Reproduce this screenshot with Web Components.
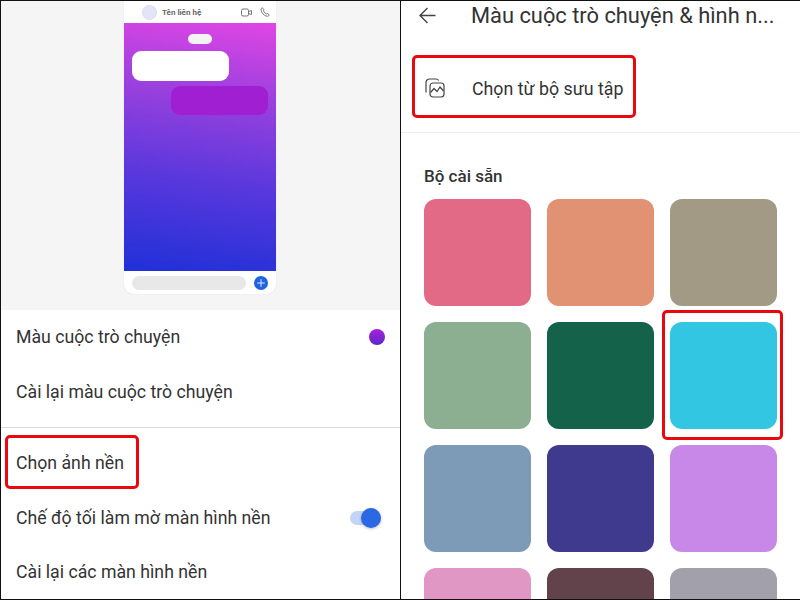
<!DOCTYPE html>
<html lang="vi">
<head>
<meta charset="utf-8">
<title>Màu cuộc trò chuyện</title>
<style>
html, body { margin: 0; height: 100%; background: #fff; }
body { font-family: Roboto, "Noto Sans", sans-serif; color: #333; overflow: hidden; }
</style>
</head>
<body>
<app-shot>
  <settings-panel slot="left">
    <chat-preview></chat-preview>
    <setting-row>Màu cuộc trò chuyện<color-dot slot="end"></color-dot></setting-row>
    <setting-row>Cài lại màu cuộc trò chuyện</setting-row>
    <hr-line></hr-line>
    <setting-row marked>Chọn ảnh nền</setting-row>
    <setting-row>Chế độ tối làm mờ màn hình nền<toggle-switch slot="end"></toggle-switch></setting-row>
    <setting-row>Cài lại các màn hình nền</setting-row>
  </settings-panel>
  <color-panel slot="right"></color-panel>
</app-shot>

<script>
class AppShot extends HTMLElement {
  constructor() {
    super();
    this.attachShadow({ mode: "open" });
    this.shadowRoot.innerHTML = `
<style>
:host { display: flex; width: 800px; height: 600px; box-sizing: border-box; border-top: 1px solid #111; border-bottom: 1px solid #111; overflow: hidden; }
.left { display: block; width: 400px; box-sizing: border-box; border-left: 1px solid #111; }
.right { display: block; width: 400px; box-sizing: border-box; border-left: 1px solid #111; }
</style>
<div class="left"><slot name="left"></slot></div>
<div class="right"><slot name="right"></slot></div>`;
  }
}

class SettingsPanel extends HTMLElement {
  constructor() {
    super();
    this.attachShadow({ mode: "open" });
    this.shadowRoot.innerHTML = `
<style>
:host { display: flex; flex-direction: column; height: 100%; }
</style>
<slot></slot>`;
  }
}

class ChatPreview extends HTMLElement {
  constructor() {
    super();
    this.attachShadow({ mode: "open" });
    this.shadowRoot.innerHTML = `
<style>
:host { display: flex; justify-content: center; flex: 0 0 auto; height: 309px; background: #f5f5f5; }
.phone { display: flex; flex-direction: column; width: 152px; height: 293px; margin-right: 1px; background: #fff; border-radius: 0 0 9px 9px; box-shadow: 0 0 1px #ccc; overflow: hidden; }
.head { display: flex; align-items: center; height: 22px; flex: none; padding: 0 6px 0 18px; gap: 5px; }
.avatar { width: 15px; height: 15px; border-radius: 50%; background: #e3e4f8; border: 1px solid #dcdcf0; box-sizing: border-box; }
.name { flex: 1; font: 700 8px Roboto, sans-serif; color: #666; white-space: nowrap; }
.head svg { display: block; }
.wall { flex: 1; display: flex; flex-direction: column; background: linear-gradient(188deg, #e046e4 0%, #9a40de 30%, #5a38dc 62%, #2030d8 100%); padding: 11px 8px 0; }
.date { align-self: center; width: 24px; height: 10px; border-radius: 5px; background: #f3f3f3; }
.in { width: 97px; height: 30px; margin-top: 7px; border-radius: 9px; background: #fff; }
.out { align-self: flex-end; width: 97px; height: 29px; margin-top: 5px; border-radius: 9px; background: #a01fd2; }
.foot { display: flex; align-items: center; height: 23px; flex: none; padding: 0 8px; gap: 8px; }
.field { flex: 1; height: 14px; border-radius: 7px; background: #e8e8e8; }
.send { display: block; }
</style>
<div class="phone">
  <div class="head">
    <span class="avatar"></span>
    <span class="name">Tên liên hệ</span>
    <svg width="11" height="9" viewBox="0 0 11 9" fill="none" stroke="#666" stroke-width="0.9"><rect x="0.5" y="1" width="7" height="7" rx="1.5"/><path d="M7.5 3.5 10.5 2.5v4l-3-1"/></svg>
    <svg width="10" height="10" viewBox="0 0 10 10" fill="none" stroke="#666" stroke-width="0.9" style="margin-left:3px"><path d="M1.2 1.6c.6-.8 1.4-.8 1.9-.2l.7 1c.3.5.1.9-.4 1.4.6 1.5 1.700 2.600 3.200 3.200.5-.5 1-.7 1.400-.3l.7.6c.5.5.4 1.300-.3 1.800-3.200 1.100-8.300-4-7.200-7.500z"/></svg>
  </div>
  <div class="wall">
    <div class="date"></div>
    <div class="in"></div>
    <div class="out"></div>
  </div>
  <div class="foot">
    <div class="field"></div>
    <svg class="send" width="14" height="14" viewBox="0 0 14 14"><circle cx="7" cy="7" r="7" fill="#1f63e0"/><path d="M7 3.200v7.600M3.200 7h7.600" stroke="#dfe9fb" stroke-width="1"/></svg>
  </div>
</div>`;
  }
}

class SettingRow extends HTMLElement {
  constructor() {
    super();
    this.attachShadow({ mode: "open" });
    this.shadowRoot.innerHTML = `
<style>
:host { display: flex; align-items: center; flex: 0 0 auto; height: 54.5px; padding: 0 15px 0 15px; font-size: 17.7px; color: #333; position: relative; }
.label { flex: 1; white-space: nowrap; }
:host([marked]) .label::after { content: ""; position: absolute; left: 4px; top: -1px; width: 134px; height: 54px; box-sizing: border-box; border: 3px solid #e8090f; border-radius: 5px; }
</style>
<span class="label"><slot></slot></span>
<slot name="end"></slot>`;
  }
}

class HrLine extends HTMLElement {
  constructor() {
    super();
    this.attachShadow({ mode: "open" });
    this.shadowRoot.innerHTML = `
<style>
:host { display: block; flex: none; height: 1px; margin: 8px 0; background: #dcdcdc; }
</style>`;
  }
}

class ColorDot extends HTMLElement {
  constructor() {
    super();
    this.attachShadow({ mode: "open" });
    this.shadowRoot.innerHTML = `
<style>
:host { display: block; width: 16px; height: 16px; border-radius: 50%; background: linear-gradient(180deg, #a622d8, #5c28c8); }
</style>`;
  }
}

class ToggleSwitch extends HTMLElement {
  constructor() {
    super();
    this.attachShadow({ mode: "open" });
    this.shadowRoot.innerHTML = `
<style>
:host { display: flex; align-items: center; justify-content: flex-end; width: 31px; height: 14px; border-radius: 7px; background: #c3d4f7; margin-right: 4px; }
.knob { width: 20px; height: 20px; border-radius: 50%; background: #2a68e4; box-shadow: 0 1px 3px rgba(0,0,0,.25); }
</style>
<div class="knob"></div>`;
  }
}

class ColorPanel extends HTMLElement {
  constructor() {
    super();
    this.attachShadow({ mode: "open" });
    const colors = ["#e36a87", "#e09272", "#a39a86", "#8baf90", "#15624a", "#33c6e3", "#7d9ab7", "#403a8e", "#c888e8", "#e097c3", "#62434b", "#a2a1ab"];
    this.shadowRoot.innerHTML = `
<style>
:host { display: flex; flex-direction: column; height: 100%; color: #333; }
.top { display: flex; align-items: center; height: 29px; flex: none; padding: 0 0 0 18px; }
.top svg { display: block; flex: none; }
h1 { margin: 0 0 0 35px; font-size: 21.85px; font-weight: 400; white-space: nowrap; color: #333; }
.pick { display: flex; align-items: center; flex: none; height: 63px; margin: 25px 0 0 11px; width: 224px; box-sizing: border-box; border: 3px solid #e8090f; border-radius: 5px; padding: 3px 0 0 10px; font-size: 17.8px; white-space: nowrap; }
.pick svg { display: block; margin-right: 27px; flex: none; }
.rule { flex: none; height: 1px; margin-top: 14px; background: #ececec; }
h2 { margin: 31px 0 11px 23px; font-size: 17px; font-weight: 500; line-height: 24px; color: #333; }
.grid { display: grid; grid-template-columns: repeat(3, 107.5px); grid-auto-rows: 107px; gap: 16px 15.5px; padding-left: 22.5px; }
.sw { border-radius: 12px; position: relative; }
.sw.on::after { content: ""; position: absolute; left: -8px; top: -12px; right: -6px; bottom: -11px; border: 3px solid #e8090f; border-radius: 5px; }
</style>
<div class="top">
  <svg width="17" height="17" viewBox="0 0 17 17" fill="none" stroke="#444" stroke-width="1.400"><path d="M16.500 8.500H1.500M8.500 1 1 8.500 8.500 16"/></svg>
  <h1>Màu cuộc trò chuyện &amp; hình n...</h1>
</div>
<div class="pick">
  <svg width="20" height="20" viewBox="0 0 20 20" fill="none" stroke="#444" stroke-width="1.200"><path d="M1 14.500V4.500A3.500 3.500 0 0 1 4.500 1H11a3 3 0 0 1 2.600 1.500"/><rect x="5" y="5" width="14" height="14" rx="3"/><path d="M5.500 14.500 9 10.500l3 3 3-4.500 3.500 4"/></svg>
  <span>Chọn từ bộ sưu tập</span>
</div>
<div class="rule"></div>
<h2>Bộ cài sẵn</h2>
<div class="grid">${colors.map((c, i) => `<div class="sw${i === 5 ? " on" : ""}" style="background:${c}"></div>`).join("")}</div>`;
  }
}

customElements.define("app-shot", AppShot);
customElements.define("settings-panel", SettingsPanel);
customElements.define("chat-preview", ChatPreview);
customElements.define("setting-row", SettingRow);
customElements.define("hr-line", HrLine);
customElements.define("color-dot", ColorDot);
customElements.define("toggle-switch", ToggleSwitch);
customElements.define("color-panel", ColorPanel);
</script>
</body>
</html>
